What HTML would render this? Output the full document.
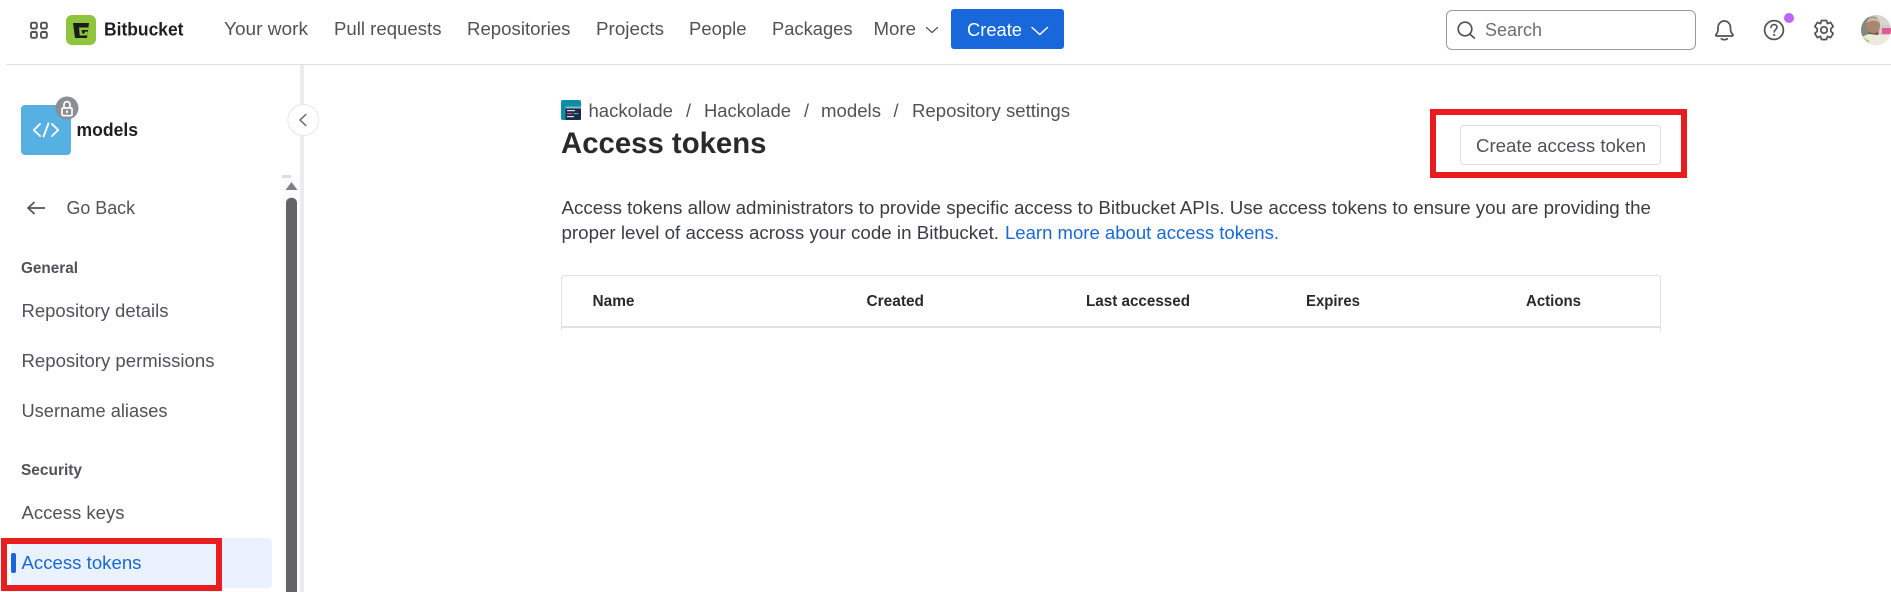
<!DOCTYPE html>
<html lang="en">
<head>
<meta charset="utf-8">
<title>Access tokens</title>
<style>
html,body{margin:0;padding:0;background:#fff;width:1891px;height:592px;overflow:hidden}
svg{display:block}
text{font-family:"Liberation Sans",sans-serif;font-size:18px;fill:#505258}
.b{font-weight:700}
.nav{font-size:18.5px}
.h{font-size:15.8px;font-weight:700;fill:#292a2e}
.s{font-size:15.8px;font-weight:700;fill:#505258}
.p{fill:#3b3d42;font-size:18px}
</style>
</head>
<body>
<svg width="1891" height="592" viewBox="0 0 1891 592" xmlns="http://www.w3.org/2000/svg">
<rect width="1891" height="592" fill="#fff"/>

<!-- header -->
<rect x="6" y="64" width="1885" height="1" fill="#dfe0e2"/>
<g fill="none" stroke="#505258" stroke-width="1.9">
<rect x="31" y="22.7" width="5.8" height="5.8" rx="1.4"/><rect x="41" y="22.7" width="5.8" height="5.8" rx="1.4"/>
<rect x="31" y="32" width="5.8" height="5.8" rx="1.4"/><rect x="41" y="32" width="5.8" height="5.8" rx="1.4"/>
</g>
<rect x="66" y="15" width="30" height="30" rx="6" fill="#8fc43c"/>
<path d="M73 23H89L87 38H75Z" fill="#1b1c1e"/>
<path d="M79 27.5H88.5L88.1 30H81.6L82.2 33.5H84.6L85 31.6H87.8L87.3 35.5H79.8Z" fill="#8fc43c"/>
<text x="104" y="35.5" class="b" textLength="79.5" lengthAdjust="spacingAndGlyphs" style="fill:#1e1f21;font-size:18.5px">Bitbucket</text>

<text x="224" y="35" class="nav" textLength="84" lengthAdjust="spacingAndGlyphs">Your work</text>
<text x="334" y="35" class="nav" textLength="107.5" lengthAdjust="spacingAndGlyphs">Pull requests</text>
<text x="467" y="35" class="nav" textLength="103.5" lengthAdjust="spacingAndGlyphs">Repositories</text>
<text x="596" y="35" class="nav" textLength="68" lengthAdjust="spacingAndGlyphs">Projects</text>
<text x="689" y="35" class="nav" textLength="57.5" lengthAdjust="spacingAndGlyphs">People</text>
<text x="772" y="35" class="nav" textLength="80.5" lengthAdjust="spacingAndGlyphs">Packages</text>
<text x="873.5" y="35" class="nav" textLength="42.5" lengthAdjust="spacingAndGlyphs">More</text>
<path d="M926.5 27.5L932 32.5L937.5 27.5" fill="none" stroke="#505258" stroke-width="1.2" stroke-linecap="round" stroke-linejoin="round"/>

<rect x="951" y="9" width="113" height="40" rx="3" fill="#1868db"/>
<text x="967" y="36" textLength="55" lengthAdjust="spacingAndGlyphs" style="fill:#fff;font-size:18.5px">Create</text>
<path d="M1032 27.5L1039.8 34.5L1047.5 27.5" fill="none" stroke="#fff" stroke-width="1.5" stroke-linecap="round" stroke-linejoin="round"/>

<!-- search -->
<rect x="1446.5" y="10.5" width="249" height="39" rx="5.5" fill="#fff" stroke="#96989f"/>
<circle cx="1465" cy="29" r="6.8" fill="none" stroke="#505258" stroke-width="1.7"/>
<path d="M1470 34.2L1474.3 38" fill="none" stroke="#505258" stroke-width="1.7" stroke-linecap="round"/>
<text x="1485" y="36" textLength="57" lengthAdjust="spacingAndGlyphs" style="fill:#6b6e76;font-size:18.5px">Search</text>

<!-- bell -->
<path d="M1716 34.5C1717.5 33 1718 31.5 1718 29V27.5C1718 24 1720.8 21 1724.3 21C1727.8 21 1730.5 24 1730.5 27.5V29C1730.5 31.5 1731.2 33 1732.8 34.5C1733.3 35.2 1732.9 36 1732.1 36H1716.7C1715.9 36 1715.5 35.2 1716 34.5Z" fill="none" stroke="#505258" stroke-width="1.7" stroke-linejoin="round"/>
<path d="M1721.3 38.8C1722.8 40 1725.8 40 1727.3 38.8" fill="none" stroke="#505258" stroke-width="1.7" stroke-linecap="round"/>
<!-- help -->
<circle cx="1774" cy="30" r="9.4" fill="none" stroke="#505258" stroke-width="1.7"/>
<path d="M1771 27.5C1771 25.6 1772.4 24.6 1774 24.6C1775.8 24.6 1777 25.8 1777 27.3C1777 29.4 1774.2 29.6 1774.2 32" fill="none" stroke="#505258" stroke-width="1.6" stroke-linecap="round"/>
<circle cx="1774.2" cy="35" r="1.1" fill="#505258"/>
<circle cx="1789" cy="18" r="5" fill="#bf63f3"/>
<!-- gear -->
<path d="M1821.5 20.5H1826.5L1827.5 23.6L1830.6 22.4L1833.2 26.6L1830.8 28.6V31.4L1833.2 33.4L1830.6 37.6L1827.5 36.4L1826.5 39.5H1821.5L1820.5 36.4L1817.4 37.6L1814.8 33.4L1817.2 31.4V28.6L1814.8 26.6L1817.4 22.4L1820.5 23.6Z" fill="none" stroke="#505258" stroke-width="1.7" stroke-linejoin="round"/>
<circle cx="1824" cy="30" r="3.2" fill="none" stroke="#505258" stroke-width="1.7"/>
<!-- user avatar -->
<clipPath id="av"><circle cx="1876" cy="30" r="15"/></clipPath>
<g clip-path="url(#av)">
<rect x="1861" y="15" width="30" height="30" fill="#cfccc8"/>
<rect x="1861" y="15" width="8" height="22" fill="#7f8b7a"/>
<rect x="1878" y="15" width="13" height="10" fill="#d8d5d0"/>
<rect x="1882" y="28" width="9" height="6" fill="#dd5a96"/>
<ellipse cx="1873" cy="25.5" rx="7" ry="9" fill="#aa8570"/>
<path d="M1866.5 23C1868 16 1878.5 16 1880 23C1876 20 1870.5 20 1866.5 23Z" fill="#cbb9aa"/>
<path d="M1868 31C1871 34 1876 34 1879 31L1878 35H1869Z" fill="#6f5648"/>
<path d="M1861 37L1869 34L1878 35L1891 35V45H1861Z" fill="#eceade"/>
<path d="M1861 36L1870 41L1866 45H1861Z" fill="#b4d46c"/>
</g>

<!-- sidebar rail -->
<rect x="300" y="65" width="4" height="527" fill="#ebecee"/>
<circle cx="303.3" cy="120" r="15.5" fill="#fff" stroke="#e6e7ea"/>
<path d="M305.8 114.5L300 120L305.8 125.5" fill="none" stroke="#63666c" stroke-width="1.5" stroke-linecap="round" stroke-linejoin="round"/>

<!-- scrollbar -->
<rect x="283" y="175" width="17" height="417" fill="#fcfcfc"/>
<rect x="282" y="175" width="9" height="3" fill="#dcdcdc"/>
<path d="M291.5 182L297.5 190H285.5Z" fill="#808080"/>
<path d="M286 592V203C286 196 297 196 297 203V592Z" fill="#646464"/>

<!-- repo icon -->
<rect x="21" y="105" width="50" height="50" rx="4" fill="#57b0e2"/>
<path d="M40 124L33.8 130L40 136M52 124L58.2 130L52 136M48.5 123.5L43.5 136.5" fill="none" stroke="#fff" stroke-width="1.9" stroke-linecap="round" stroke-linejoin="round"/>
<circle cx="67" cy="108" r="11.5" fill="#8a8d94"/>
<rect x="62" y="108" width="10" height="7.6" rx="1.2" fill="none" stroke="#fff" stroke-width="1.7"/>
<path d="M64 108V104.6C64 100.6 70 100.6 70 104.6V108" fill="none" stroke="#fff" stroke-width="1.7"/>
<rect x="66" y="110.5" width="2" height="2.4" fill="#fff"/>
<text x="76.5" y="136" class="b" textLength="61.5" lengthAdjust="spacingAndGlyphs" style="fill:#1e1f21;font-size:18.5px">models</text>

<!-- sidebar nav -->
<path d="M28 208H44.5M34 202.5L28 208L34 213.5" fill="none" stroke="#505258" stroke-width="1.7" stroke-linecap="round" stroke-linejoin="round"/>
<text x="66.5" y="214" textLength="68.5" lengthAdjust="spacingAndGlyphs">Go Back</text>
<text x="21" y="273" class="s" textLength="57" lengthAdjust="spacingAndGlyphs">General</text>
<text x="21.5" y="317" textLength="147" lengthAdjust="spacingAndGlyphs">Repository details</text>
<text x="21.5" y="367" textLength="193" lengthAdjust="spacingAndGlyphs">Repository permissions</text>
<text x="21.5" y="417" textLength="146" lengthAdjust="spacingAndGlyphs">Username aliases</text>
<text x="21" y="475" class="s" textLength="61" lengthAdjust="spacingAndGlyphs">Security</text>
<text x="21.5" y="519" textLength="103" lengthAdjust="spacingAndGlyphs">Access keys</text>

<rect x="11" y="538" width="261" height="50" rx="4" fill="#e9f2fe"/>
<rect x="11" y="553" width="5" height="20" rx="2" fill="#1868db"/>
<text x="21.5" y="569" textLength="120" lengthAdjust="spacingAndGlyphs" style="fill:#1868db">Access tokens</text>
<rect x="4" y="541" width="215" height="47" fill="none" stroke="#e91c1f" stroke-width="6"/>

<!-- breadcrumb -->
<rect x="561" y="100" width="20" height="20" rx="2" fill="#0d8ea6"/>
<rect x="565.5" y="106.5" width="15.5" height="13.5" rx="1" fill="#1d2b4a"/>
<rect x="565.5" y="106.5" width="15.5" height="2" fill="#8fb6c9"/>
<rect x="567" y="110" width="8" height="1.2" fill="#d7e3ea"/>
<rect x="567" y="113" width="5" height="1.2" fill="#e0504f"/>
<rect x="573.5" y="113" width="5" height="1.2" fill="#3fb3a8"/>
<rect x="567" y="116" width="7" height="1.2" fill="#d7e3ea"/>
<text x="588.5" y="117" textLength="84.5" lengthAdjust="spacingAndGlyphs">hackolade</text>
<text x="686" y="117">/</text>
<text x="704" y="117" textLength="87" lengthAdjust="spacingAndGlyphs">Hackolade</text>
<text x="804" y="117">/</text>
<text x="821" y="117" textLength="60" lengthAdjust="spacingAndGlyphs">models</text>
<text x="893.5" y="117">/</text>
<text x="912" y="117" textLength="158" lengthAdjust="spacingAndGlyphs">Repository settings</text>

<text x="561" y="153" class="b" textLength="205.5" lengthAdjust="spacingAndGlyphs" style="fill:#292a2e;font-size:30px">Access tokens</text>

<!-- create access token -->
<rect x="1433" y="112" width="251" height="63" fill="none" stroke="#e91c1f" stroke-width="6"/>
<rect x="1460.5" y="125.5" width="200" height="39" rx="3" fill="#fff" stroke="#dcdee2"/>
<text x="1476" y="152" textLength="170" lengthAdjust="spacingAndGlyphs">Create access token</text>

<!-- description -->
<text x="561.5" y="214" class="p" textLength="1089.5" lengthAdjust="spacingAndGlyphs">Access tokens allow administrators to provide specific access to Bitbucket APIs. Use access tokens to ensure you are providing the</text>
<text x="561.5" y="239" class="p" textLength="437.5" lengthAdjust="spacingAndGlyphs">proper level of access across your code in Bitbucket.</text>
<text x="1005" y="239" textLength="274" lengthAdjust="spacingAndGlyphs" style="fill:#1868db">Learn more about access tokens.</text>

<!-- table -->
<path d="M561.5 331V279C561.5 276.5 563 275.5 565.5 275.5H1656.5C1659 275.5 1660.5 276.5 1660.5 279V331" fill="none" stroke="#dfe1e4"/>
<rect x="561" y="326" width="1100" height="2" fill="#dfe1e4"/>
<text x="592.5" y="306" class="h" textLength="42" lengthAdjust="spacingAndGlyphs">Name</text>
<text x="866.5" y="306" class="h" textLength="57.5" lengthAdjust="spacingAndGlyphs">Created</text>
<text x="1086" y="306" class="h" textLength="104" lengthAdjust="spacingAndGlyphs">Last accessed</text>
<text x="1306" y="306" class="h" textLength="54" lengthAdjust="spacingAndGlyphs">Expires</text>
<text x="1526" y="306" class="h" textLength="55" lengthAdjust="spacingAndGlyphs">Actions</text>
</svg>
</body>
</html>
